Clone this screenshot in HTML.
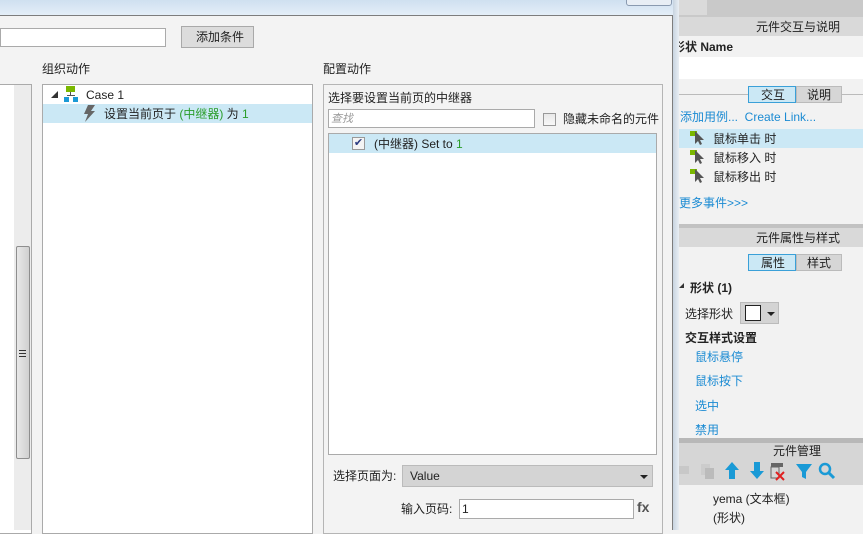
<!DOCTYPE html>
<html><head><meta charset="utf-8"><style>
*{margin:0;padding:0;box-sizing:border-box}
body{width:863px;height:530px;overflow:hidden;position:relative;background:#f2f2f2;font-family:"Liberation Sans","Noto Sans CJK SC",sans-serif;font-size:12px;color:#222}
.a{position:absolute}
.t{position:absolute;white-space:nowrap;line-height:14px}
.blue{color:#1b8bd3}
</style></head><body>
<div class="a" style="left:0;top:0;width:680px;height:15px;background:linear-gradient(#cfe0f0,#e4eef8)"></div>
<div class="a" style="left:626px;top:-6px;width:46px;height:12px;border:1px solid #8a9ab0;border-radius:3px;background:#e8eef5"></div>
<div class="a" style="left:0;top:15px;width:673px;height:515px;background:#f3f3f3;border-top:1px solid #7d7d7d;border-right:1px solid #7d7d7d"></div>
<div class="a" style="left:0;top:28px;width:166px;height:19px;background:#fff;border:1px solid #aaa"></div>
<div class="a" style="left:181px;top:26px;width:73px;height:22px;background:#dcdcdc;border:1px solid #a9a9a9"></div>
<div class="t" style="left:196px;top:30px">添加条件</div>
<div class="t" style="left:42px;top:62px">组织动作</div>
<div class="t" style="left:323px;top:62px">配置动作</div>
<div class="a" style="left:-1px;top:84px;width:33px;height:450px;background:#fff;border:1px solid #aaa"></div>
<div class="a" style="left:14px;top:85px;width:17px;height:445px;background:#ececec"></div>
<div class="a" style="left:16px;top:246px;width:14px;height:213px;background:linear-gradient(90deg,#e8e8e8,#d0d0d0);border:1px solid #8e8e8e;border-radius:2px"></div>
<div class="a" style="left:19px;top:350px;width:7px;height:7px;border-top:1px solid #333;border-bottom:1px solid #333"><div style="margin-top:2px;height:1px;background:#333"></div></div>
<div class="a" style="left:42px;top:84px;width:271px;height:450px;background:#fff;border:1px solid #aaa"></div>
<div class="a" style="left:51px;top:91px;width:0;height:0;border-left:7px solid transparent;border-bottom:7px solid #333"></div>
<div class="a" style="left:66px;top:86px;width:9px;height:6px;background:#7ab800"></div>
<div class="a" style="left:70px;top:92px;width:1px;height:3px;background:#555"></div>
<div class="a" style="left:67px;top:95px;width:8px;height:1px;background:#555"></div>
<div class="a" style="left:64px;top:97px;width:5px;height:5px;background:#1a9ad6"></div>
<div class="a" style="left:73px;top:97px;width:5px;height:5px;background:#1a9ad6"></div>
<div class="t" style="left:86px;top:88px">Case 1</div>
<div class="a" style="left:43px;top:104px;width:269px;height:19px;background:#cbe8f5"></div>
<svg class="a" style="left:82px;top:105px" width="14" height="17"><path d="M6 0h7l-4 6h4L3 17l3-8H2z" fill="#666"/></svg>
<div class="t" style="left:104px;top:107px">设置当前页于 <span style="color:#2a9d2a">(中继器)</span> 为 <span style="color:#2a9d2a">1</span></div>
<div class="a" style="left:323px;top:84px;width:340px;height:450px;border:1px solid #b5b5b5;background:#f3f3f3"></div>
<div class="t" style="left:328px;top:91px">选择要设置当前页的中继器</div>
<div class="a" style="left:328px;top:109px;width:207px;height:19px;background:#fff;border:1px solid #aaa"></div>
<div class="t" style="left:331px;top:112px;color:#999;font-style:italic;font-size:11px">查找</div>
<div class="a" style="left:543px;top:113px;width:13px;height:13px;border:1px solid #999;background:linear-gradient(#e8e8e8,#f8f8f8)"></div>
<div class="t" style="left:563px;top:112px">隐藏未命名的元件</div>
<div class="a" style="left:328px;top:133px;width:329px;height:322px;background:#fff;border:1px solid #aaa"></div>
<div class="a" style="left:329px;top:134px;width:327px;height:19px;background:#cbe8f5"></div>
<div class="a" style="left:352px;top:137px;width:13px;height:13px;border:1px solid #999;background:#f4f4f4;color:#2a3a80;font-size:11px;line-height:11px;text-align:center">✔</div>
<div class="t" style="left:374px;top:137px">(中继器) Set to <span style="color:#2a9d2a">1</span></div>
<div class="t" style="left:333px;top:469px">选择页面为:</div>
<div class="a" style="left:402px;top:465px;width:251px;height:22px;background:#d4d4d4;border:1px solid #bbb"></div>
<div class="t" style="left:410px;top:469px">Value</div>
<div class="a" style="left:640px;top:475px;border-left:4px solid transparent;border-right:4px solid transparent;border-top:4px solid #222"></div>
<div class="t" style="left:401px;top:502px">输入页码:</div>
<div class="a" style="left:459px;top:499px;width:175px;height:20px;background:#fff;border:1px solid #aaa"></div>
<div class="t" style="left:462px;top:502px">1</div>
<div class="t" style="left:637px;top:500px;font-weight:bold;color:#555;font-size:14px">fx</div>
<div class="a" style="left:679px;top:0;width:184px;height:17px;background:#c9c9c9"></div>
<div class="a" style="left:679px;top:0;width:28px;height:15px;background:#dadada"></div>
<div class="a" style="left:679px;top:17px;width:184px;height:19px;background:#d9d9d9"></div>
<div class="t" style="left:756px;top:20px">元件交互与说明</div>
<div class="t" style="left:673px;top:40px;font-weight:bold">形状 Name</div>
<div class="a" style="left:679px;top:57px;width:184px;height:22px;background:#fff"></div>
<div class="a" style="left:679px;top:94px;width:184px;height:1px;background:#bbb"></div>
<div class="a" style="left:748px;top:86px;width:48px;height:17px;background:#cbe8f5;border:1px solid #3aa0d8"></div>
<div class="t" style="left:761px;top:88px">交互</div>
<div class="a" style="left:796px;top:86px;width:46px;height:17px;background:#d6d6d6;border:1px solid #bbb"></div>
<div class="t" style="left:807px;top:88px">说明</div>
<div class="t blue" style="left:680px;top:110px">添加用例... &nbsp;Create Link...</div>
<div class="a" style="left:679px;top:129px;width:184px;height:19px;background:#cbe8f5"></div>
<div class="t" style="left:713px;top:132px">鼠标单击 时</div>
<div class="t" style="left:713px;top:151px">鼠标移入 时</div>
<div class="t" style="left:713px;top:170px">鼠标移出 时</div>
<svg class="a" style="left:690px;top:130px" width="16" height="58"><g id="c"><rect x="0" y="1" width="7" height="5" fill="#7ab800"/><path d="M5 1v13l3-3 2 4 2-1-2-4h4z" fill="#555"/></g><use href="#c" y="19"/><use href="#c" y="38"/></svg>
<div class="t blue" style="left:679px;top:196px">更多事件&gt;&gt;&gt;</div>
<div class="a" style="left:679px;top:224px;width:184px;height:4px;background:#c2c2c2"></div>
<div class="a" style="left:679px;top:228px;width:184px;height:19px;background:#d9d9d9"></div>
<div class="t" style="left:756px;top:231px">元件属性与样式</div>
<div class="a" style="left:748px;top:254px;width:48px;height:17px;background:#cbe8f5;border:1px solid #3aa0d8"></div>
<div class="t" style="left:761px;top:256px">属性</div>
<div class="a" style="left:796px;top:254px;width:46px;height:17px;background:#d6d6d6;border:1px solid #bbb"></div>
<div class="t" style="left:807px;top:256px">样式</div>
<div class="a" style="left:679px;top:283px;border-left:5px solid transparent;border-bottom:5px solid #333"></div>
<div class="t" style="left:690px;top:281px;font-weight:bold">形状 (1)</div>
<div class="t" style="left:685px;top:307px">选择形状</div>
<div class="a" style="left:740px;top:302px;width:39px;height:22px;background:#d4d4d4;border:1px solid #bbb"></div>
<div class="a" style="left:745px;top:305px;width:16px;height:16px;background:#fff;border:1px solid #222"></div>
<div class="a" style="left:767px;top:312px;border-left:4px solid transparent;border-right:4px solid transparent;border-top:4px solid #222"></div>
<div class="t" style="left:685px;top:331px;font-weight:bold">交互样式设置</div>
<div class="t blue" style="left:695px;top:350px">鼠标悬停</div>
<div class="t blue" style="left:695px;top:374px">鼠标按下</div>
<div class="t blue" style="left:695px;top:399px">选中</div>
<div class="t blue" style="left:695px;top:423px">禁用</div>
<div class="a" style="left:679px;top:438px;width:184px;height:5px;background:#b8b8b8"></div>
<div class="a" style="left:679px;top:443px;width:184px;height:42px;background:#d6d6d6"></div>
<div class="t" style="left:773px;top:444px">元件管理</div>
<svg class="a" style="left:679px;top:460px" width="160" height="22">
<rect x="0" y="6" width="10" height="8" fill="#c8c8c8"/><rect x="22" y="4" width="9" height="11" fill="#ccc"/><rect x="26" y="8" width="9" height="11" fill="#bbb"/>
<path d="M53 2l-7 8h4v9h6v-9h4z" fill="#1a9ad6"/>
<path d="M75 2v9h-4l7 8 7-8h-4V2z" fill="#1a9ad6"/>
<rect x="92" y="3" width="12" height="4" fill="#666"/><rect x="92" y="7" width="8" height="11" fill="none" stroke="#666"/><path d="M97 12l8 8M105 12l-8 8" stroke="#e02020" stroke-width="2"/>
<path d="M117 4h16l-6 8v7l-4-2v-5z" fill="#1a9ad6"/>
<circle cx="146" cy="9" r="5" fill="none" stroke="#1a9ad6" stroke-width="2.5"/><path d="M150 13l5 5" stroke="#1a9ad6" stroke-width="3"/>
</svg>
<div class="t" style="left:713px;top:492px">yema (文本框)</div>
<div class="t" style="left:713px;top:511px">(形状)</div>
<div class="a" style="left:673px;top:0;width:6px;height:530px;background:linear-gradient(90deg,#c8d4e0,#e8eef4)"></div>
</body></html>
